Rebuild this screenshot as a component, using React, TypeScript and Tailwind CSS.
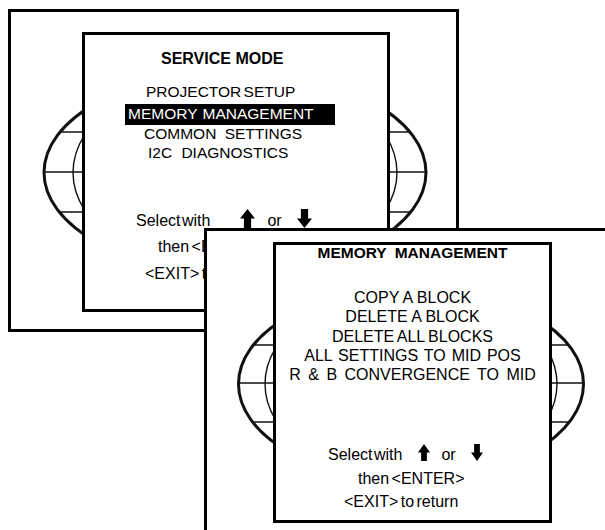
import React from "react";

const FONT = { fontFamily: '"Liberation Sans", Arial, sans-serif' };

function Globe({
  vb,
  w,
  h,
  cx,
  cy,
  rx,
  ry,
  mrx,
  lats,
}: {
  vb: string;
  w: number;
  h: number;
  cx: number;
  cy: number;
  rx: number;
  ry: number;
  mrx: number;
  lats: number[];
}) {
  return (
    <svg className="absolute left-0 top-0" width={w} height={h} viewBox={vb}>
      {lats.map((y) => {
        const t = (y - cy) / ry;
        const half = rx * Math.sqrt(Math.max(0, 1 - t * t));
        return (
          <line key={y} x1={cx - half} x2={cx + half} y1={y} y2={y} stroke="#111" strokeWidth={1.5} />
        );
      })}
      <ellipse cx={cx} cy={cy} rx={mrx} ry={ry} fill="none" stroke="#111" strokeWidth={1.4} />
      <ellipse cx={cx} cy={cy} rx={rx} ry={ry} fill="none" stroke="#111" strokeWidth={3} />
    </svg>
  );
}

function UpArrow({ w, h }: { w: number; h: number }) {
  const hh = h * 0.5;
  const s = w * 0.24;
  return (
    <svg width={w} height={h} viewBox={`0 0 ${w} ${h}`} className="shrink-0">
      <path
        d={`M${w / 2} 0 L${w} ${hh} L${w / 2 + s} ${hh} L${w / 2 + s} ${h} L${w / 2 - s} ${h} L${w / 2 - s} ${hh} L0 ${hh} Z`}
        fill="#000"
      />
    </svg>
  );
}

function DownArrow({ w, h }: { w: number; h: number }) {
  const hh = h * 0.5;
  const s = w * 0.24;
  return (
    <svg width={w} height={h} viewBox={`0 0 ${w} ${h}`} className="shrink-0">
      <path
        d={`M${w / 2} ${h} L${w} ${hh} L${w / 2 + s} ${hh} L${w / 2 + s} 0 L${w / 2 - s} 0 L${w / 2 - s} ${hh} L0 ${hh} Z`}
        fill="#000"
      />
    </svg>
  );
}

export default function App() {
  return (
    <div className="relative w-[605px] h-[530px] overflow-hidden bg-white text-black" style={FONT}>
      {/* Screen 1 */}
      <div className="absolute left-[8px] top-[9px] w-[451px] h-[323px] border-[3px] border-black bg-white">
        <Globe
          vb="11 12 445 317"
          w={445}
          h={317}
          cx={235}
          cy={172.5}
          rx={191}
          ry={101}
          mrx={162}
          lats={[132, 172, 212]}
        />
        <div className="relative ml-[71px] mt-[20px] w-[308px] h-[280px] border-[3px] border-black bg-white flex flex-col">
          <div className="mt-[16px] pl-[76px] h-[16px] leading-[16px] text-[16px] font-bold whitespace-pre">
            SERVICE MODE
          </div>
          <div className="mt-[17px] pl-[61px] h-[16px] leading-[16px] text-[15.5px] whitespace-pre [word-spacing:-2px]">
            PROJECTOR SETUP
          </div>
          <div className="mt-[4px] ml-[40px] w-[210px] h-[21px] bg-black text-white pl-[3px] pt-[2px] leading-[16px] text-[15.5px] whitespace-pre [word-spacing:1px]">
            MEMORY MANAGEMENT
          </div>
          <div className="mt-[1px] pl-[59px] h-[16px] leading-[16px] text-[15.5px] whitespace-pre [word-spacing:4px]">
            COMMON SETTINGS
          </div>
          <div className="mt-[3px] pl-[63px] h-[16px] leading-[16px] text-[15.5px] whitespace-pre [word-spacing:5px]">
            I2C DIAGNOSTICS
          </div>
          <div className="mt-[52px] pl-[51px] h-[16px] flex items-start text-[16px] leading-[16px]">
            <span className="whitespace-pre [word-spacing:-3px]">Select with</span>
            <span className="ml-[30px] -mt-[4px]">
              <UpArrow w={15} h={19} />
            </span>
            <span className="ml-[12px]">or</span>
            <span className="ml-[15px] -mt-[4px]">
              <DownArrow w={15} h={19} />
            </span>
          </div>
          <div className="mt-[10px] pl-[73px] h-[16px] leading-[16px] text-[16px] whitespace-pre [word-spacing:-2px]">
            then &lt;ENTER&gt;
          </div>
          <div className="mt-[11px] pl-[60px] h-[16px] leading-[16px] text-[16px] whitespace-pre [word-spacing:-2px]">
            &lt;EXIT&gt; to return
          </div>
        </div>
      </div>

      {/* Screen 2 */}
      <div className="absolute left-[204px] top-[228px] w-[410px] h-[310px] border-[3px] border-black bg-white">
        <Globe
          vb="207 231 404 304"
          w={404}
          h={304}
          cx={411}
          cy={384}
          rx={172.5}
          ry={96}
          mrx={146}
          lats={[345, 383, 422]}
        />
        <div className="relative ml-[66px] mt-[11px] w-[279px] h-[281px] border-[3px] border-black bg-white flex flex-col">
          <div className="h-[16px] leading-[16px] text-[15.5px] font-bold text-center whitespace-pre [word-spacing:4px]">
            MEMORY MANAGEMENT
          </div>
          <div className="mt-[27px] text-[16px] leading-[19.25px] text-center whitespace-pre">
            <div>COPY A BLOCK</div>
            <div>DELETE A BLOCK</div>
            <div className="[word-spacing:-1px]">DELETE ALL BLOCKS</div>
            <div className="[word-spacing:1.5px]">ALL SETTINGS TO MID POS</div>
            <div className="[word-spacing:3px]">R &amp; B CONVERGENCE TO MID</div>
          </div>
          <div className="mt-[63px] pl-[52px] h-[16px] flex items-start text-[16px] leading-[16px]">
            <span className="whitespace-pre [word-spacing:-3px]">Select with</span>
            <span className="ml-[16px] -mt-[3px]">
              <UpArrow w={12} h={17} />
            </span>
            <span className="ml-[11px]">or</span>
            <span className="ml-[15px] -mt-[3px]">
              <DownArrow w={12} h={17} />
            </span>
          </div>
          <div className="mt-[7.5px] pl-[82px] h-[16px] leading-[16px] text-[16px] whitespace-pre [word-spacing:-2px]">
            then &lt;ENTER&gt;
          </div>
          <div className="mt-[7px] pl-[68px] h-[16px] leading-[16px] text-[16px] whitespace-pre [word-spacing:-2px]">
            &lt;EXIT&gt; to return
          </div>
        </div>
      </div>
    </div>
  );
}
